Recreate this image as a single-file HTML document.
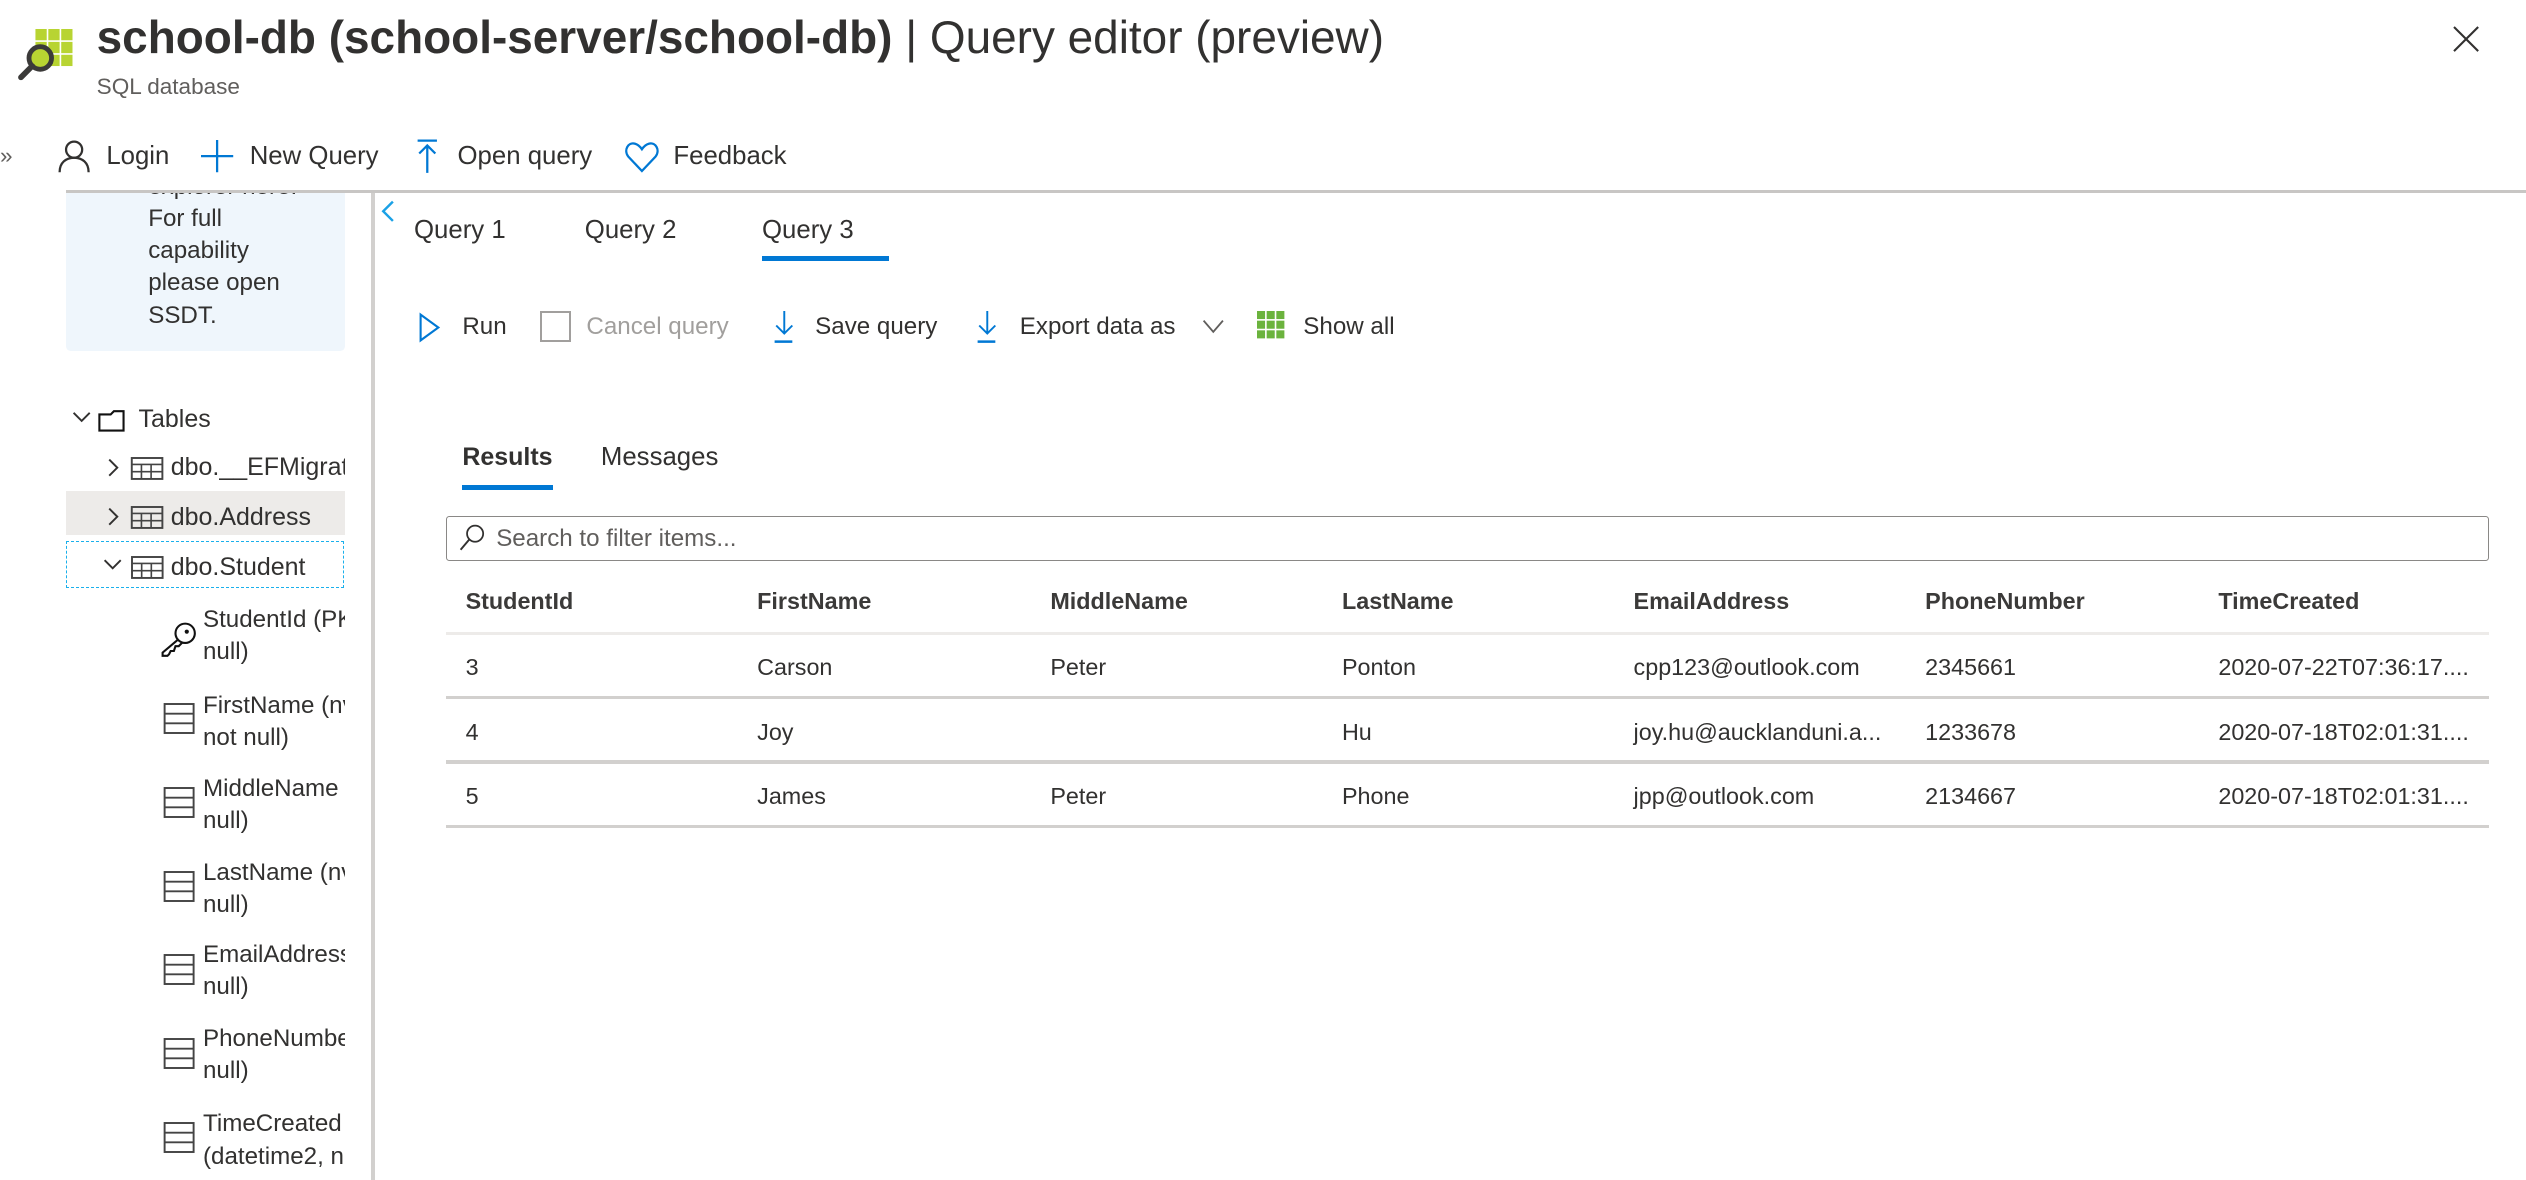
<!DOCTYPE html>
<html><head><meta charset="utf-8">
<style>
html,body{margin:0;padding:0;background:#fff;overflow:hidden;width:2526px;height:1180px}
#w{position:relative;width:1568px;height:733px;zoom:1.611;font-family:"Liberation Sans",sans-serif;color:#323130}
.a{position:absolute;white-space:nowrap}
.t16{font-size:16px}
.t15{font-size:15px}
svg{position:absolute;overflow:visible}
.tree{font-size:15px;line-height:20px}
.th{font-weight:bold;font-size:14.5px;color:#3b3a39}
.td{font-size:14.5px}
.hl{position:absolute;left:277px;width:1268px;height:2px;background:#d2d0ce}
</style></head><body><div id="w">

<svg style="left:0;top:0" width="50" height="55">
<g fill="#b8d432">
<rect x="22" y="18" width="7" height="7"/><rect x="30" y="18" width="7" height="7"/><rect x="38" y="18" width="7" height="7"/>
<rect x="22" y="26" width="7" height="7"/><rect x="30" y="26" width="7" height="7"/><rect x="38" y="26" width="7" height="7"/>
<rect x="22" y="34" width="7" height="7"/><rect x="30" y="34" width="7" height="7"/><rect x="38" y="34" width="7" height="7"/>
</g>
<circle cx="25" cy="36" r="7" fill="#b8d432" stroke="#3b3a39" stroke-width="3"/>
<line x1="20" y1="41" x2="13" y2="48" stroke="#3b3a39" stroke-width="3.5" stroke-linecap="round"/>
</svg>
<div class="a" style="left:60px;top:6px;font-size:28.5px;color:#323130"><b>school-db (school-server/school-db)</b> | Query editor (preview)</div>
<div class="a" style="left:60px;top:46px;font-size:14px;color:#605e5c">SQL database</div>
<svg style="left:1523px;top:17px" width="16" height="16"><path d="M0 0L15 15M15 0L0 15" stroke="#323130" stroke-width="1.3"/></svg>

<div class="a" style="left:0;top:89px;font-size:14px;color:#605e5c">»</div>
<svg style="left:36px;top:87px" width="20" height="20"><circle cx="10" cy="6" r="5" fill="none" stroke="#323130" stroke-width="1.4"/><path d="M1 20C1 14 5 11 10 11S19 14 19 20" fill="none" stroke="#323130" stroke-width="1.4"/></svg>
<div class="a t16" style="left:66px;top:88px">Login</div>
<svg style="left:125px;top:87px" width="20" height="20"><path d="M10 0V20M0 10H20" stroke="#0078d4" stroke-width="1.4"/></svg>
<div class="a t16" style="left:155px;top:88px">New Query</div>
<svg style="left:258px;top:86px" width="14" height="22"><path d="M1 1H13M7 4V21M2 9L7 4L12 9" fill="none" stroke="#0078d4" stroke-width="1.4"/></svg>
<div class="a t16" style="left:284px;top:88px">Open query</div>
<svg style="left:388px;top:88px" width="21" height="19"><path d="M10.5 18L2 9C-1 5 2 0 6 1C8 1.5 9.5 3 10.5 4.5C11.5 3 13 1.5 15 1C19 0 22 5 19 9Z" fill="none" stroke="#0078d4" stroke-width="1.4"/></svg>
<div class="a t16" style="left:418px;top:88px">Feedback</div>

<div class="a" style="left:41px;top:118px;width:1527px;height:2px;background:#c8c6c4"></div>

<div class="a" style="left:41px;top:120px;width:173px;height:98px;background:#eff6fc;border-radius:0 0 3px 3px;overflow:hidden">
<div class="a tree" style="left:51px;top:-14px">explorer here.<br>For full<br>capability<br>please open<br>SSDT.</div>
</div>
<div class="a" style="left:230px;top:120px;width:3px;height:613px;background:#d2d0ce"></div>
<svg style="left:236px;top:124px" width="10" height="14"><path d="M8 1L2 7L8 13" fill="none" stroke="#1aa1e6" stroke-width="1.5"/></svg>

<div class="a" style="left:41px;top:305px;width:173px;height:27px;background:#edebe9"></div>
<div class="a" style="left:41px;top:336px;width:171px;height:28px;border:1px dashed #1ab0ec"></div>
<svg style="left:45px;top:253px" width="40" height="20"><path d="M1 3L6 8L11 3" fill="none" stroke="#323130" stroke-width="1.2"/><path d="M17 4H24L26 2H32V14H17Z" fill="none" stroke="#111" stroke-width="1.3"/></svg>
<div class="a tree" style="left:86px;top:250px;font-size:15.5px">Tables</div>
<svg style="left:66px;top:284px" width="40" height="18"><path d="M2 1L7 6L2 11" fill="none" stroke="#323130" stroke-width="1.2"/><rect x="16" y="0" width="19" height="13" fill="none" stroke="#444" stroke-width="1.2"/><path d="M16 4H35M16 8.5H35M22 4V13M28 4V13" stroke="#444" stroke-width="1"/></svg>
<svg style="left:66px;top:315px" width="40" height="18"><path d="M2 1L7 6L2 11" fill="none" stroke="#323130" stroke-width="1.2"/><rect x="16" y="0" width="19" height="13" fill="none" stroke="#444" stroke-width="1.2"/><path d="M16 4H35M16 8.5H35M22 4V13M28 4V13" stroke="#444" stroke-width="1"/></svg>
<svg style="left:64px;top:346px" width="40" height="18"><path d="M1 2L6 7L11 2" fill="none" stroke="#323130" stroke-width="1.2"/><rect x="18" y="0" width="19" height="13" fill="none" stroke="#444" stroke-width="1.2"/><path d="M18 4H37M18 8.5H37M24 4V13M30 4V13" stroke="#444" stroke-width="1"/></svg>
<div class="a" style="left:106px;top:281px;width:108px;overflow:hidden;font-size:15.5px">dbo.__EFMigrationsHistory</div>
<div class="a" style="left:106px;top:312px;font-size:15.5px">dbo.Address</div>
<div class="a" style="left:106px;top:343px;font-size:15.5px">dbo.Student</div>

<svg style="left:100px;top:386px" width="22" height="22"><circle cx="15" cy="7" r="6" fill="none" stroke="#111" stroke-width="1.3"/><circle cx="16" cy="6" r="1.3" fill="#111"/><path d="M10.5 11L1 19V21H4L5 20L6 18L8 18L9 15L11 15L13 13" fill="none" stroke="#111" stroke-width="1.3"/></svg>
<svg style="left:101px;top:437px" width="20" height="20"><g fill="none" stroke="#444" stroke-width="1.2"><rect x="1" y="0" width="18" height="18"/><path d="M1 6H19M1 12H19"/></g></svg>
<svg style="left:101px;top:489px" width="20" height="20"><g fill="none" stroke="#444" stroke-width="1.2"><rect x="1" y="0" width="18" height="18"/><path d="M1 6H19M1 12H19"/></g></svg>
<svg style="left:101px;top:541px" width="20" height="20"><g fill="none" stroke="#444" stroke-width="1.2"><rect x="1" y="0" width="18" height="18"/><path d="M1 6H19M1 12H19"/></g></svg>
<svg style="left:101px;top:593px" width="20" height="20"><g fill="none" stroke="#444" stroke-width="1.2"><rect x="1" y="0" width="18" height="18"/><path d="M1 6H19M1 12H19"/></g></svg>
<svg style="left:101px;top:645px" width="20" height="20"><g fill="none" stroke="#444" stroke-width="1.2"><rect x="1" y="0" width="18" height="18"/><path d="M1 6H19M1 12H19"/></g></svg>
<svg style="left:101px;top:697px" width="20" height="20"><g fill="none" stroke="#444" stroke-width="1.2"><rect x="1" y="0" width="18" height="18"/><path d="M1 6H19M1 12H19"/></g></svg>
<div class="a tree" style="left:126px;top:375px;width:88px;overflow:hidden">StudentId (PK, int, not<br>null)</div>
<div class="a tree" style="left:126px;top:428px;width:88px;overflow:hidden">FirstName (nvarchar,<br>not null)</div>
<div class="a tree" style="left:126px;top:480px;width:88px;overflow:hidden">MiddleName (nvarchar,<br>null)</div>
<div class="a tree" style="left:126px;top:532px;width:88px;overflow:hidden">LastName (nvarchar,<br>null)</div>
<div class="a tree" style="left:126px;top:583px;width:88px;overflow:hidden">EmailAddress (nvarchar,<br>null)</div>
<div class="a tree" style="left:126px;top:635px;width:88px;overflow:hidden">PhoneNumber (nvarchar,<br>null)</div>
<div class="a tree" style="left:126px;top:688px;width:88px;overflow:hidden">TimeCreated<br>(datetime2, not null)</div>

<div class="a t16" style="left:257px;top:134px">Query 1</div>
<div class="a t16" style="left:363px;top:134px">Query 2</div>
<div class="a t16" style="left:473px;top:134px">Query 3</div>
<div class="a" style="left:473px;top:159px;width:79px;height:3px;background:#0078d4"></div>

<svg style="left:260px;top:194px" width="14" height="18"><path d="M1 1L12 9L1 17Z" fill="none" stroke="#0078d4" stroke-width="1.3"/></svg>
<div class="a t15" style="left:287px;top:194px">Run</div>
<div class="a" style="left:335px;top:193px;width:17px;height:17px;border:1.5px solid #a19f9d"></div>
<div class="a t15" style="left:364px;top:194px;color:#a19f9d">Cancel query</div>
<svg style="left:480px;top:193px" width="14" height="20"><path d="M7 0V14M2 9L7 14L12 9" fill="none" stroke="#0078d4" stroke-width="1.2"/><path d="M1 19H12" stroke="#0078d4" stroke-width="1.5"/></svg>
<div class="a t15" style="left:506px;top:194px">Save query</div>
<svg style="left:606px;top:193px" width="14" height="20"><path d="M7 0V14M2 9L7 14L12 9" fill="none" stroke="#0078d4" stroke-width="1.2"/><path d="M1 19H12" stroke="#0078d4" stroke-width="1.5"/></svg>
<div class="a t15" style="left:633px;top:194px">Export data as</div>
<svg style="left:746px;top:198px" width="14" height="10"><path d="M1 1L7 8L13 1" fill="none" stroke="#605e5c" stroke-width="1.1"/></svg>
<svg style="left:780px;top:193px" width="18" height="18"><g fill="#6bb33d"><rect x="0" y="0" width="5" height="5"/><rect x="6" y="0" width="5" height="5"/><rect x="12" y="0" width="5" height="5"/><rect x="0" y="6" width="5" height="5"/><rect x="6" y="6" width="5" height="5"/><rect x="12" y="6" width="5" height="5"/><rect x="0" y="12" width="5" height="5"/><rect x="6" y="12" width="5" height="5"/><rect x="12" y="12" width="5" height="5"/></g></svg>
<div class="a t15" style="left:809px;top:194px">Show all</div>

<div class="a t16" style="left:287px;top:275px;font-weight:bold;font-size:15.5px">Results</div>
<div class="a t16" style="left:373px;top:275px">Messages</div>
<div class="a" style="left:287px;top:301px;width:56px;height:3px;background:#0078d4"></div>

<div class="a" style="left:277px;top:320px;width:1267px;height:27px;border:1px solid #8a8886;border-radius:2px"></div>
<svg style="left:285px;top:325px" width="16" height="18"><circle cx="10" cy="6" r="5" fill="none" stroke="#323130" stroke-width="1.1"/><path d="M6.5 9.5L1 16" stroke="#323130" stroke-width="1.2"/></svg>
<div class="a t15" style="left:308px;top:326px;color:#605e5c">Search to filter items...</div>

<div class="a th" style="left:289px;top:365px">StudentId</div>
<div class="a th" style="left:470px;top:365px">FirstName</div>
<div class="a th" style="left:652px;top:365px">MiddleName</div>
<div class="a th" style="left:833px;top:365px">LastName</div>
<div class="a th" style="left:1014px;top:365px">EmailAddress</div>
<div class="a th" style="left:1195px;top:365px">PhoneNumber</div>
<div class="a th" style="left:1377px;top:365px">TimeCreated</div>
<div class="hl" style="top:392px;background:#edebe9"></div>

<div class="a td" style="left:289px;top:406px">3</div>
<div class="a td" style="left:470px;top:406px">Carson</div>
<div class="a td" style="left:652px;top:406px">Peter</div>
<div class="a td" style="left:833px;top:406px">Ponton</div>
<div class="a td" style="left:1014px;top:406px">cpp123@outlook.com</div>
<div class="a td" style="left:1195px;top:406px">2345661</div>
<div class="a td" style="left:1377px;top:406px">2020-07-22T07:36:17....</div>
<div class="hl" style="top:432px"></div>

<div class="a td" style="left:289px;top:446px">4</div>
<div class="a td" style="left:470px;top:446px">Joy</div>
<div class="a td" style="left:833px;top:446px">Hu</div>
<div class="a td" style="left:1014px;top:446px">joy.hu@aucklanduni.a...</div>
<div class="a td" style="left:1195px;top:446px">1233678</div>
<div class="a td" style="left:1377px;top:446px">2020-07-18T02:01:31....</div>
<div class="hl" style="top:472px"></div>

<div class="a td" style="left:289px;top:486px">5</div>
<div class="a td" style="left:470px;top:486px">James</div>
<div class="a td" style="left:652px;top:486px">Peter</div>
<div class="a td" style="left:833px;top:486px">Phone</div>
<div class="a td" style="left:1014px;top:486px">jpp@outlook.com</div>
<div class="a td" style="left:1195px;top:486px">2134667</div>
<div class="a td" style="left:1377px;top:486px">2020-07-18T02:01:31....</div>
<div class="hl" style="top:512px"></div>

</div></body></html>
